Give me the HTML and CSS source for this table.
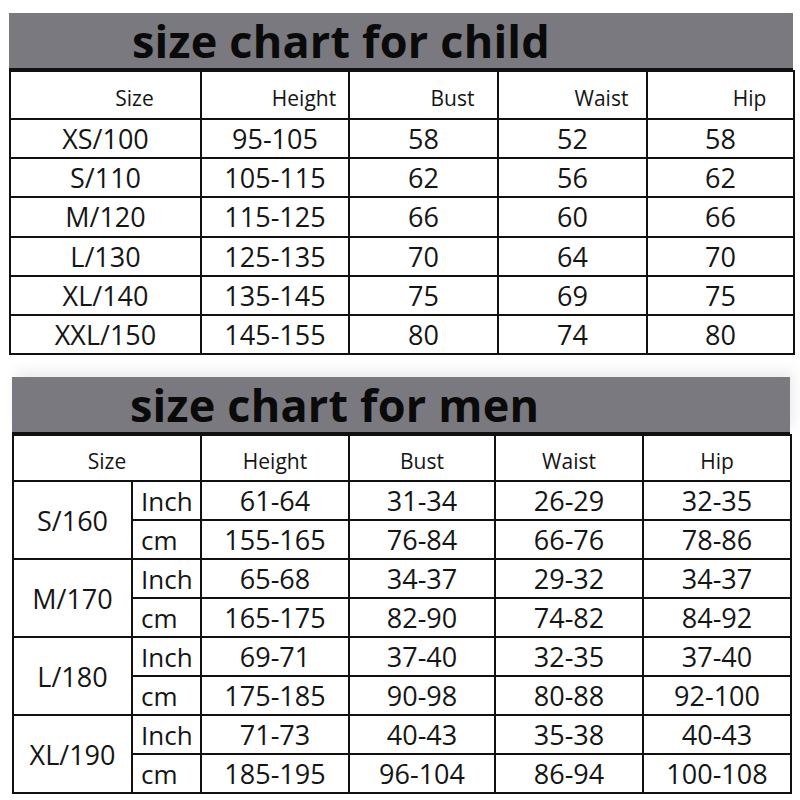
FILE: index.html
```html
<!DOCTYPE html>
<html>
<head>
<meta charset="utf-8">
<link rel="stylesheet" href="styles.css">
</head>
<body>
<div class="page">
  <section class="chart chart-child">
    <div class="title">size chart for child</div>
    <table>
      <colgroup>
        <col class="c1"><col class="c2"><col class="c3"><col class="c4"><col class="c5">
      </colgroup>
      <tr class="head">
        <th>Size</th><th>Height</th><th>Bust</th><th>Waist</th><th>Hip</th>
      </tr>
      <tr><td>XS/100</td><td>95-105</td><td>58</td><td>52</td><td>58</td></tr>
      <tr><td>S/110</td><td>105-115</td><td>62</td><td>56</td><td>62</td></tr>
      <tr><td>M/120</td><td>115-125</td><td>66</td><td>60</td><td>66</td></tr>
      <tr><td>L/130</td><td>125-135</td><td>70</td><td>64</td><td>70</td></tr>
      <tr><td>XL/140</td><td>135-145</td><td>75</td><td>69</td><td>75</td></tr>
      <tr><td>XXL/150</td><td>145-155</td><td>80</td><td>74</td><td>80</td></tr>
    </table>
  </section>

  <section class="chart chart-men">
    <div class="title">size chart for men</div>
    <table>
      <colgroup>
        <col class="m1"><col class="m2"><col class="m3"><col class="m4"><col class="m5"><col class="m6">
      </colgroup>
      <tr class="head">
        <th colspan="2">Size</th><th>Height</th><th>Bust</th><th>Waist</th><th>Hip</th>
      </tr>
      <tr><td rowspan="2">S/160</td><td class="unit">Inch</td><td>61-64</td><td>31-34</td><td>26-29</td><td>32-35</td></tr>
      <tr><td class="unit">cm</td><td>155-165</td><td>76-84</td><td>66-76</td><td>78-86</td></tr>
      <tr><td rowspan="2">M/170</td><td class="unit">Inch</td><td>65-68</td><td>34-37</td><td>29-32</td><td>34-37</td></tr>
      <tr><td class="unit">cm</td><td>165-175</td><td>82-90</td><td>74-82</td><td>84-92</td></tr>
      <tr><td rowspan="2">L/180</td><td class="unit">Inch</td><td>69-71</td><td>37-40</td><td>32-35</td><td>37-40</td></tr>
      <tr><td class="unit">cm</td><td>175-185</td><td>90-98</td><td>80-88</td><td>92-100</td></tr>
      <tr><td rowspan="2">XL/190</td><td class="unit">Inch</td><td>71-73</td><td>40-43</td><td>35-38</td><td>40-43</td></tr>
      <tr><td class="unit">cm</td><td>185-195</td><td>96-104</td><td>86-94</td><td>100-108</td></tr>
    </table>
  </section>
</div>
</body>
</html>
```

FILE: styles.css
```css
html, body {
  margin: 0;
  padding: 0;
  background: #ffffff;
}

body {
  font-family: "Open Sans", "Noto Sans", sans-serif;
  color: #151515;
  width: 800px;
  height: 800px;
  overflow: hidden;
}

.page {
  display: flex;
  flex-direction: column;
  padding-top: 13px;
}

.chart-child {
  margin-left: 9px;
  width: 784px;
}

.chart-men {
  margin-top: 22px;
  margin-left: 12px;
  width: 778px;
}

.title {
  background: #7a7980;
  height: 55px;
  line-height: 55px;
  border-bottom: 2px solid #111;
  font-weight: 700;
  font-size: 45px;
  letter-spacing: 0.2px;
  color: #0a0a0a;
  padding-left: 123px;
  white-space: nowrap;
}

.chart-men .title {
  padding-left: 118px;
  box-shadow: 4px -6px 12px rgba(0, 0, 0, 0.08);
}

table {
  border-collapse: separate;
  border-spacing: 0;
  table-layout: fixed;
  width: 100%;
  border-top: 2px solid #111;
  border-left: 2px solid #111;
}

th, td {
  border-right: 2px solid #111;
  border-bottom: 2px solid #111;
  padding: 0;
  text-align: center;
  vertical-align: middle;
  white-space: nowrap;
  overflow: hidden;
}

th {
  font-weight: 400;
  font-size: 21px;
  height: 40px;
  padding-top: 6px;
}

.chart-men th {
  height: 38px;
}

.chart-child th {
  padding-left: 58px;
}

td {
  font-size: 27px;
  height: 37px;
}

.chart-child td {
  height: 37.2px;
}

.chart-men td {
  height: 36.6px;
}

td.unit {
  text-align: left;
  padding-left: 8px;
  font-size: 26px;
}

.c1 { width: 191px; }
.c2 { width: 148px; }
.c3 { width: 149px; }
.c4 { width: 149px; }
.c5 { width: 147px; }

.m1 { width: 119px; }
.m2 { width: 69px; }
.m3 { width: 148px; }
.m4 { width: 146px; }
.m5 { width: 148px; }
.m6 { width: 148px; }
```
